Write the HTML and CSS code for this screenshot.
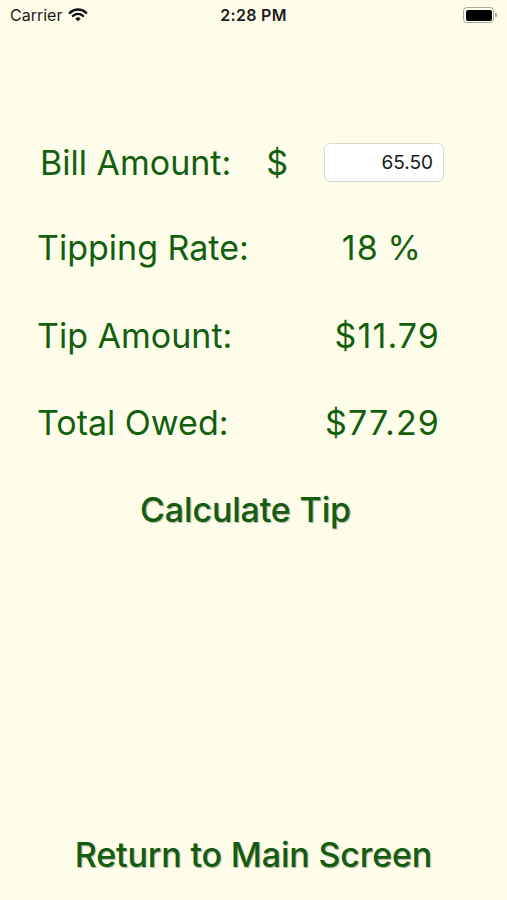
FILE: index.html
```html
<!DOCTYPE html>
<html>
<head>
<meta charset="utf-8">
<link rel="stylesheet" href="styles.css">
</head>
<body>
<div class="statusbar">
  <div class="sb-left">
    <span class="carrier">Carrier</span>
    <svg class="wifi" width="20" height="15" viewBox="0 0 20 15">
      <path d="M1.8 5.9 A11.6 11.6 0 0 1 18.2 5.9" fill="none" stroke="#111" stroke-width="2.4" stroke-linecap="round"/>
      <path d="M4.9 9.0 A7.2 7.2 0 0 1 15.1 9.0" fill="none" stroke="#111" stroke-width="2.4" stroke-linecap="round"/>
      <path d="M10 14.3 L7.3 11.6 A3.8 3.8 0 0 1 12.7 11.6 Z" fill="#111"/>
    </svg>
  </div>
  <div class="sb-time">2:28 PM</div>
  <div class="sb-right">
    <div class="battery"><div class="battery-fill"></div></div>
    <div class="battery-cap"></div>
  </div>
</div>

<main class="form">
  <div class="row row-bill">
    <span class="label">Bill Amount:</span>
    <span class="dollar">$</span>
    <div class="field">65.50</div>
  </div>
  <div class="row row-rate">
    <span class="label">Tipping Rate:</span>
    <span class="value rate">18 %</span>
  </div>
  <div class="row row-tip">
    <span class="label">Tip Amount:</span>
    <span class="value">$11.79</span>
  </div>
  <div class="row row-total">
    <span class="label">Total Owed:</span>
    <span class="value">$77.29</span>
  </div>
  <div class="button-row">
    <span class="btn">Calculate Tip</span>
  </div>
</main>

<footer class="footer">
  <span class="btn">Return to Main Screen</span>
</footer>
</body>
</html>
```
FILE: styles.css
```css
html, body {
  margin: 0;
  padding: 0;
}
body {
  background: #fefde9;
  font-family: "Inter", "Liberation Sans", Arial, sans-serif;
  color: #12600f;
  width: 507px;
  height: 900px;
  display: flex;
  flex-direction: column;
  overflow: hidden;
}
.statusbar {
  height: 30px;
  display: flex;
  align-items: center;
  justify-content: space-between;
  padding: 0 10px;
  position: relative;
  color: #1c1c1c;
  font-size: 16px;
}
.sb-left {
  display: flex;
  align-items: center;
  gap: 6px;
}
.carrier {
  font-weight: 400;
}
.wifi {
  margin-top: -2px;
}
.sb-time {
  position: absolute;
  left: 0;
  right: 0;
  text-align: center;
  font-weight: 600;
  letter-spacing: 0.3px;
  pointer-events: none;
}
.sb-right {
  display: flex;
  align-items: center;
}
.battery {
  width: 26px;
  height: 11px;
  border: 1.5px solid #a8a8a0;
  border-radius: 4px;
  padding: 1.5px;
  box-sizing: content-box;
  margin-right: 1px;
}
.battery-fill {
  width: 100%;
  height: 100%;
  background: #000;
  border-radius: 2px;
}
.battery-cap {
  width: 2px;
  height: 4px;
  background: #a8a8a0;
  border-radius: 0 1px 1px 0;
}

.form {
  padding: 110px 68px 0 37px;
  display: flex;
  flex-direction: column;
}
.row {
  height: 44px;
  display: flex;
  align-items: center;
  justify-content: space-between;
  font-size: 34px;
}
.row-bill {
  padding-left: 3px;
  margin-right: -5px;
}
.row-rate { margin-top: 41px; }
.row-tip { margin-top: 44px; }
.row-total { margin-top: 43px; }
.dollar {
  margin-left: 35px;
}
.value {
  letter-spacing: 1.1px;
  margin-right: -1px;
}
.field {
  margin-left: auto;
  width: 108px;
  height: 37px;
  background: #fff;
  border: 1px solid #d9d9d2;
  border-radius: 6px;
  text-align: right;
  padding-right: 10px;
  font-size: 19px;
  line-height: 37px;
  color: #1a1a1a;
}
.rate {
  margin-right: 17px;
  word-spacing: -2px;
}
.button-row {
  margin-top: 43px;
  height: 44px;
  display: flex;
  align-items: center;
  justify-content: center;
  padding-left: 15px;
}
.btn {
  font-size: 34px;
  font-weight: 500;
  color: #145c12;
  letter-spacing: -0.15px;
  text-shadow: 1px 1px 1px rgba(60, 70, 60, 0.4);
}
.footer {
  margin-top: auto;
  height: 44px;
  display: flex;
  align-items: center;
  justify-content: center;
  padding-bottom: 24px;
}
```
